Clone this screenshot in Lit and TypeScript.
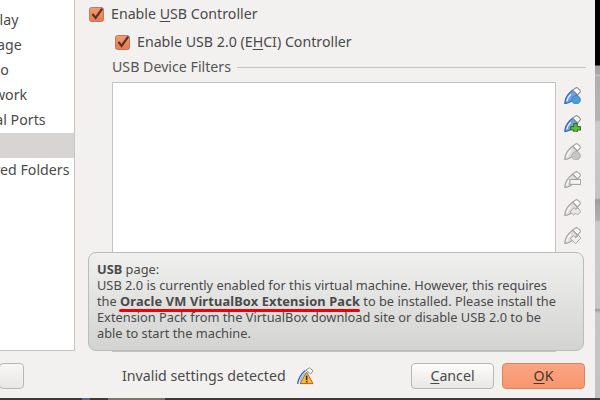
import { LitElement, html, css, svg } from "lit";
import { customElement } from "lit/decorators.js";

const body = (fill: string, edge: string, hi: string, cap: string) => svg`
  <path d="M.8 15.6 C.9 12 2.2 8.6 4.8 6 L8 3 L12.8 7.6 L9.8 10.8 C7.2 13.6 4.2 15.2 .8 15.6 Z" fill="${fill}" stroke="${edge}" stroke-width="1.1" stroke-linejoin="round"/>
  <path d="M2.6 13.6 C3.2 11 4.4 8.8 6.4 7" fill="none" stroke="${hi}" stroke-width="1.1"/>
  <path d="M8.2 3 L11 .9 C11.6 .5 12.3 .5 12.9 1 L15 3 C15.5 3.6 15.5 4.3 15 4.9 L12.8 7.4 Z" fill="#fcfcfc" stroke="${cap}" stroke-width="1"/>`;

const blue = () => body("#6f9fe4", "#2a62c0", "#ffffff", "#8e8e8e");
const grey = () => body("#dededc", "#a2a2a0", "#ffffff", "#a2a2a0");

const ICONS = [
  svg`${blue()}<circle cx="11.4" cy="12" r="4" fill="#4f9bd8" stroke="#3a7cbc" stroke-width=".8"/>`,
  svg`${blue()}<path d="M9.2 8h3.4v2.9h3v3.3h-3v2.6H9.2v-2.6H6.3v-3.3h2.9z" fill="#62b53e" stroke="#256f14" stroke-width=".9"/>`,
  svg`${grey()}<circle cx="11.4" cy="12" r="4" fill="#c6c6c4" stroke="#a8a8a6" stroke-width=".8"/>`,
  svg`${grey()}<rect x="5.5" y="8" width="10.2" height="4.6" fill="#f4f4f2" stroke="#a2a2a0"/>`,
  svg`${grey()}<path d="M5.6 12 L9.5 8.2 L11.2 9.8 L13 8.2 L15.8 12 L12.8 15 L11.2 13.4 L9 15 Z" fill="#e8e8e6" stroke="#a2a2a0" stroke-width=".9"/>`,
  svg`${grey()}<path d="M5.8 10.8 L9 8.2 L11 10.2 L13.6 7.8 L15.8 10.2 L11 15.6 Z" fill="#f0f0ee" stroke="#a2a2a0" stroke-width=".9"/>`,
];

@customElement("app-root")
export class AppRoot extends LitElement {
  static styles = css`
    :host {
      display: flex;
      flex-direction: column;
      position: relative;
      width: 600px;
      height: 400px;
      overflow: hidden;
      background: #3c3b37;
      font-family: "Noto Sans", "Open Sans", sans-serif;
      font-size: 14.2px;
      color: #4a4a4a;
    }
    .top { display: flex; height: 398px; flex: none; }
    .window { width: 595px; flex: none; display: flex; flex-direction: column; background: #f2f1f0; }
    .edge {
      flex: 1;
      background: linear-gradient(
        #000 0, #000 65px, #a0a0a0 66px, #a8a8a8 74px, #c4c4c4 75px, #aeaeae 77px, #b4b4b4 120px,
        #cacaca 122px, #c4c4c4 198px, #9c9c9c 200px, #a4a4a4 205px, #b0b0b0 220px, #cacaca 222px,
        #c6c6c6 308px, #9c9c9c 310px, #c6c6c6 313px, #c2c2c2 398px
      );
    }
    .below { display: flex; align-items: flex-start; padding-left: 82px; flex: 1; }
    .below i { display: block; height: 2px; }
    .below .a { width: 8px; background: #56658a; }
    .below .b { width: 57px; margin-left: 18px; background: #77766f; }
    .main { display: flex; height: 352px; }
    .side {
      width: 75px; height: 351px; box-sizing: border-box; padding-top: 8px; flex: none;
      background: #fff; border-right: 1px solid #c6c4c2; border-bottom: 1px solid #c6c4c2;
      overflow: hidden;
    }
    .row { height: 25px; line-height: 24px; margin-left: -30px; white-space: nowrap; }
    .row.sel { margin-left: 0; background: #d6d5d3; }
    .panel { flex: 1; display: flex; flex-direction: column; padding-left: 14px; min-width: 0; }
    .check { display: flex; align-items: center; gap: 7px; height: 15px; white-space: nowrap; }
    .check span { margin-top: -2px; }
    .check.a { margin-top: 7px; }
    .check.b { margin-top: 13px; margin-left: 26px; }
    .box { width: 15px; height: 15px; flex: none; display: block; overflow: visible; }
    u { text-decoration-thickness: 1px; text-underline-offset: 2px; }
    .legend { display: flex; align-items: center; gap: 6px; margin: 9px 0 0 23px; height: 16px; width: 474px; color: #555; }
    .legend span { margin-top: -2px; }
    .legend i { flex: 1; height: 1px; background: #c6c4c2; }
    .listrow { display: flex; margin: 7px 0 0 23px; flex: 1; min-height: 0; }
    .list { width: 444px; box-sizing: border-box; background: #fff; border: 1px solid #c6c4c2; }
    .tools { display: flex; flex-direction: column; gap: 11px; margin: 5px 0 0 8px; }
    .tools svg { display: block; width: 17px; height: 17px; }
    .footer { display: flex; align-items: center; height: 26px; margin-top: 11px; }
    .btn {
      box-sizing: border-box; height: 26px; display: flex; align-items: center; justify-content: center;
      border: 1px solid #b9b7b3; border-radius: 4px; padding-bottom: 2px;
      background: linear-gradient(#fdfdfc, #e9e7e4);
    }
    .btn.left { width: 25px; margin-left: -1px; flex: none; background: linear-gradient(#f8f7f6, #e9e7e4); }
    .status { margin-left: 98px; width: 174px; flex: none; white-space: nowrap; padding-bottom: 2px; }
    .warn { width: 18px; height: 18px; display: block; flex: none; }
    .btn.cancel { width: 83px; margin-left: 97px; flex: none; }
    .btn.ok { width: 83px; margin-left: 8px; flex: none; background: linear-gradient(#fba582, #f7966f); border-color: #d98560; color: #46362f; }
    .tip {
      position: absolute; left: 88px; top: 252px; width: 496px; height: 99px; box-sizing: border-box;
      padding: 8px 7px 0 8px; border: 1px solid #bcbcba; border-radius: 8px;
      background: linear-gradient(#f0f0ef, #d3d3d2);
      font-size: 12.8px; line-height: 16px; color: #4a4a4a;
    }
    .tip p { margin: 0; white-space: nowrap; }
    .mark { position: relative; font-weight: 700; letter-spacing: .15px; }
    .mark::after {
      content: ""; position: absolute; left: -1px; right: 0; bottom: -2px; height: 3px;
      background: #f00008; border-radius: 1.5px;
    }
  `;

  private check() {
    return html`<svg class="box" viewBox="0 0 15 15">
      <defs><linearGradient id="g" x1="0" y1="0" x2="0" y2="1"><stop offset="0" stop-color="#f59a72"/><stop offset="1" stop-color="#ec7a4c"/></linearGradient></defs>
      <rect x=".5" y=".5" width="14" height="14" rx="2" fill="url(#g)" stroke="#b97c62"/>
      <path d="M3.4 6.8 L6.6 11 L13.2 1.6" fill="none" stroke="#54342a" stroke-width="2.2"/>
    </svg>`;
  }

  render() {
    return html`
      <div class="top">
        <div class="window">
          <div class="main">
            <div class="side">
              <div class="row">Display</div>
              <div class="row">Storage</div>
              <div class="row">Audio</div>
              <div class="row">Network</div>
              <div class="row">Serial Ports</div>
              <div class="row sel"></div>
              <div class="row">Shared Folders</div>
            </div>
            <div class="panel">
              <div class="check a">${this.check()}<span>Enable <u>U</u>SB Controller</span></div>
              <div class="check b">${this.check()}<span>Enable USB 2.0 (E<u>H</u>CI) Controller</span></div>
              <div class="legend"><span>USB Device Filters</span><i></i></div>
              <div class="listrow">
                <div class="list"></div>
                <div class="tools">${ICONS.map((i) => html`<svg viewBox="0 0 16 16">${i}</svg>`)}</div>
              </div>
            </div>
          </div>
          <div class="footer">
            <div class="btn left"></div>
            <span class="status">Invalid settings detected</span>
            <svg class="warn" viewBox="0 0 18 18">
              <path d="M1.6 16.8 C2.2 12 4.4 7.4 9.4 3.4" fill="none" stroke="#2a62c0" stroke-width="1.3"/>
              <path d="M4 14.5 C5 11 6.6 8.4 9 6" fill="none" stroke="#9dbce8" stroke-width="1.2"/>
              <path d="M10 3 L13.4 .8 L17 3.8 L14.6 7 Z" fill="#fcfcfc" stroke="#8e8e8e"/>
              <path d="M10.6 5.2 L17 16.6 H4 Z" fill="#f7bd3d" stroke="#b8601c" stroke-linejoin="round"/>
              <rect x="9.9" y="8.6" width="1.5" height="4.6" fill="#2a2a2a"/><rect x="9.9" y="14" width="1.5" height="1.5" fill="#2a2a2a"/>
            </svg>
            <div class="btn cancel"><span><u>C</u>ancel</span></div>
            <div class="btn ok"><span><u>O</u>K</span></div>
          </div>
        </div>
        <div class="edge"></div>
      </div>
      <div class="below"><i class="a"></i><i class="b"></i></div>
      <div class="tip">
        <p><b>USB</b> page:</p>
        <p>USB 2.0 is currently enabled for this virtual machine. However, this requires</p>
        <p>the <span class="mark">Oracle VM VirtualBox Extension Pack</span> to be installed. Please install the</p>
        <p>Extension Pack from the VirtualBox download site or disable USB 2.0 to be</p>
        <p>able to start the machine.</p>
      </div>
    `;
  }
}
